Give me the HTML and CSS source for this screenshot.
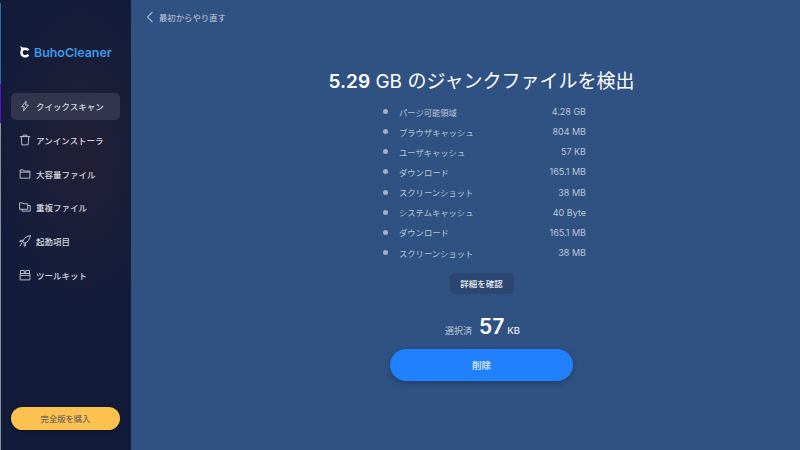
FILE: index.html
```html
<!DOCTYPE html>
<html lang="ja">
<head>
  <meta charset="UTF-8">
  <title>BuhoCleaner</title>
  <link rel="stylesheet" href="styles.css">
</head>
<body>
  <aside class="sidebar">
    <div class="logo">
      <svg class="logo-mark" width="11" height="12" viewBox="0 0 11 12" fill="none">
        <path d="M8.300 4.300A3.800 3.800 0 1 0 8.300 8.700" stroke="#fff" stroke-width="2.400"/>
        <path d="M.2 .2L4.200 2 1.300 3.800Z" fill="#fff"/>
      </svg>
      <span>BuhoCleaner</span>
    </div>

    <nav class="nav">
      <a class="nav-item active">
        <svg viewBox="0 0 16 16" fill="none" stroke="#c9ccd6" stroke-width="1.200" stroke-linejoin="round"><path d="M9.500 1.500L3.500 9h3.600L6 14.500 12.500 6.800H8.800Z"/></svg>
        <span>クイックスキャン</span>
      </a>
      <a class="nav-item">
        <svg viewBox="0 0 16 16" fill="none" stroke="#c9ccd6" stroke-width="1.200" stroke-linecap="round" stroke-linejoin="round"><path d="M1.500 3.500h13M5.500 3.500V1.500h5v2M3 3.500l.8 11h8.400l.8-11"/></svg>
        <span>アンインストーラ</span>
      </a>
      <a class="nav-item">
        <svg viewBox="0 0 16 16" fill="none" stroke="#c9ccd6" stroke-width="1.200" stroke-linejoin="round"><path d="M1.500 2.500h4.500l1.200 1.600h7.300v9.400h-13ZM1.500 5.500h13"/></svg>
        <span>大容量ファイル</span>
      </a>
      <a class="nav-item">
        <svg viewBox="0 0 16 16" fill="none" stroke="#c9ccd6" stroke-width="1.200" stroke-linejoin="round"><path d="M.8 2.500h3.800l1 1.200h6V11H.8ZM11.600 6h3.400v7.500H4V11"/></svg>
        <span>重複ファイル</span>
      </a>
      <a class="nav-item">
        <svg viewBox="0 0 16 16" fill="none" stroke="#c9ccd6" stroke-width="1.200" stroke-linejoin="round" stroke-linecap="round"><path d="M15 1C10 1.500 7 4 5 8.500l2.500 2.500c4.500-2 7-5 7.500-10ZM5.600 7L1.500 7.300 1 9l4 .2M9 10.400L8.700 14.500l-1.700.5-.2-4M3.500 11L1.500 14.500"/></svg>
        <span>起動項目</span>
      </a>
      <a class="nav-item">
        <svg viewBox="0 0 16 16" fill="none" stroke="#c9ccd6" stroke-width="1.200" stroke-linejoin="round"><path d="M1.500 6h13v8.500h-13ZM1.500 8.500h13M2 6V2h5v4M9 6V2h5v4"/></svg>
        <span>ツールキット</span>
      </a>
    </nav>

    <button class="buy-btn">完全版を購入</button>
  </aside>

  <main class="main">
    <div class="topbar">
      <svg width="8" height="12" viewBox="0 0 8 12" fill="none" stroke="#a9b6cc" stroke-width="1.100"><path d="M6.500 1L1.500 6l5 5"/></svg>
      <span>最初からやり直す</span>
    </div>

    <div class="content">
      <h1 class="title"><b>5.29</b> GB のジャンクファイルを検出</h1>

      <ul class="junk-list">
        <li><span>パージ可能領域</span><span class="size">4.28 GB</span></li>
        <li><span>ブラウザキャッシュ</span><span class="size">804 MB</span></li>
        <li><span>ユーザキャッシュ</span><span class="size">57 KB</span></li>
        <li><span>ダウンロード</span><span class="size">165.1 MB</span></li>
        <li><span>スクリーンショット</span><span class="size">38 MB</span></li>
        <li><span>システムキャッシュ</span><span class="size">40 Byte</span></li>
        <li><span>ダウンロード</span><span class="size">165.1 MB</span></li>
        <li><span>スクリーンショット</span><span class="size">38 MB</span></li>
      </ul>

      <button class="detail-btn">詳細を確認</button>

      <div class="selected">
        <span class="selected-label">選択済</span>
        <span class="selected-num">57</span>
        <span class="selected-unit">KB</span>
      </div>

      <button class="delete-btn">削除</button>
    </div>
  </main>
</body>
</html>
```

FILE: styles.css
```css
* {
  box-sizing: border-box;
}

html, body {
  height: 100%;
}

body {
  margin: 0;
  display: flex;
  overflow: hidden;
  background-color: #2f5283;
  font-family: Inter, "Noto Sans CJK JP", sans-serif;
  color: #fff;
}

.sidebar {
  width: 131px;
  height: 450px;
  flex-shrink: 0;
  display: flex;
  flex-direction: column;
  padding: 0 10px 20px 10px;
  border-left: 1px solid;
  border-image: linear-gradient(to bottom, #1a1c2c 0, #1a1c2c 4px, #2a6aa8 4px, #2a6aa8 85px, #5a10c0 85px, #5a10c0 123px, #8a8f9c 123px, #8a8f9c 100%) 1;
  background: radial-gradient(ellipse 90px 170px at 80px 150px, #231f37 0%, rgba(35, 31, 55, 0) 100%), #121c3a;
}

.logo {
  display: flex;
  align-items: center;
  gap: 3px;
  height: 20px;
  margin-top: 42px;
  padding-left: 9px;
  font-size: 12.400px;
  font-weight: 600;
  color: #3c9bec;
}

.nav {
  display: flex;
  flex-direction: column;
  gap: 6.800px;
  margin-top: 31px;
}

.nav-item {
  display: flex;
  align-items: center;
  gap: 5px;
  width: 109px;
  height: 27px;
  padding: 0 0 1px 8px;
  border-radius: 5px;
  font-size: 8.500px;
  font-weight: 500;
  color: #d5d7de;
}

.nav-item svg {
  width: 12px;
  height: 12px;
}

.nav-item.active {
  background-color: #33354e;
}

.buy-btn {
  width: 109px;
  height: 23px;
  margin-top: auto;
  padding: 0 0 2px;
  border: none;
  border-radius: 12px;
  background-color: #fdc14f;
  box-shadow: 0 2px 4px rgba(0, 0, 0, 0.35);
  font-family: inherit;
  font-size: 8.300px;
  font-weight: 500;
  color: #6e6a5c;
}

.main {
  flex: 1;
  display: flex;
  flex-direction: column;
}

.topbar {
  display: flex;
  align-items: center;
  gap: 5px;
  height: 34px;
  padding-left: 15px;
  font-size: 8.400px;
  color: #c6cedc;
}

.content {
  display: flex;
  flex-direction: column;
  align-items: center;
  padding-left: 32px;
}

.title {
  margin: 35px 0 0;
  height: 26px;
  font-size: 19px;
  line-height: 26px;
  font-weight: 400;
}

.title b {
  font-weight: 600;
}

.junk-list {
  width: 205px;
  margin: 7px 0 0 4px;
  padding: 0;
  list-style: none;
  font-size: 8.300px;
  color: #bcc6d6;
}

.junk-list li {
  position: relative;
  display: flex;
  justify-content: space-between;
  align-items: center;
  height: 20.150px;
  padding: 0 0 1px 18px;
}

.junk-list li::before {
  content: "";
  position: absolute;
  left: 2px;
  top: 7px;
  width: 5px;
  height: 5px;
  border-radius: 50%;
  background-color: #a3afc4;
}

.junk-list .size {
  font-size: 9px;
}

.detail-btn {
  width: 64px;
  height: 21px;
  margin-top: 10px;
  padding: 0 0 2px;
  border: none;
  border-radius: 5px;
  background-color: #2b4670;
  font-family: inherit;
  font-size: 8.500px;
  font-weight: 500;
  color: #e4e8ef;
}

.selected {
  display: flex;
  align-items: baseline;
  height: 32px;
  margin-top: 20px;
  padding-left: 2px;
}

.selected-label {
  font-size: 9px;
  color: #bcc6d6;
}

.selected-num {
  margin-left: 7px;
  font-size: 21px;
  font-weight: 600;
}

.selected-unit {
  margin-left: 3px;
  font-size: 9.500px;
  font-weight: 500;
  color: #e4e8ef;
}

.delete-btn {
  width: 183px;
  height: 32px;
  margin-top: 3px;
  padding: 0 0 1px;
  border: none;
  border-radius: 16px;
  background-color: #2180fe;
  box-shadow: 0 2px 6px rgba(0, 0, 0, 0.25);
  font-family: inherit;
  font-size: 9.500px;
  font-weight: 500;
  color: #e8f1ff;
}
```
